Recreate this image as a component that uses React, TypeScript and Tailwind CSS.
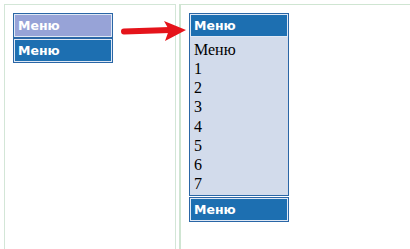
import React from "react";

function Item({ fill, className = "" }: { fill: string; className?: string }) {
  return (
    <div className={`border border-[#2a66a6] ${className}`}>
      <div
        className={`border border-[#dfe8f5] h-[23px] pl-[3px] text-white font-bold text-[12.5px] leading-[21px] ${fill}`}
        style={{ fontFamily: '"DejaVu Sans", Verdana, sans-serif' }}
      >
        Меню
      </div>
    </div>
  );
}

export default function App() {
  const items = ["Меню", "1", "2", "3", "4", "5", "6", "7"];
  return (
    <div className="relative w-[410px] h-[249px] bg-white flex overflow-hidden">
      <div className="ml-[4px] mt-[4px] w-[172px] h-[245px] border border-b-0 border-[#d3e6d7] p-[8px]">
        <div className="w-[100px] flex flex-col">
          <Item fill="bg-[#97a3d7]" />
          <Item fill="bg-[#1d6fb1]" />
        </div>
      </div>
      <div className="ml-[3px] mt-[4px] flex-1 h-[245px] border-l-2 border-t border-[#cfe5d2] p-[8px]">
        <div className="w-[100px] flex flex-col">
          <div className="border border-[#2a66a6] bg-[#d2dbeb]">
            <div
              className="border border-[#dfe8f5] h-[23px] pl-[3px] text-white font-bold text-[12.5px] leading-[21px] bg-[#1d6fb1]"
              style={{ fontFamily: '"DejaVu Sans", Verdana, sans-serif' }}
            >
              Меню
            </div>
            <div
              className="pl-[4px] pt-[3px] pb-[2px] text-black text-[16px] leading-[19.15px]"
              style={{ fontFamily: '"Liberation Serif", "Times New Roman", serif' }}
            >
              {items.map((t) => (
                <div key={t}>{t}</div>
              ))}
            </div>
          </div>
          <Item fill="bg-[#1d6fb1]" className="mt-[1px]" />
        </div>
      </div>
      <svg
        className="absolute left-[120px] top-[16px]"
        width="70"
        height="30"
        viewBox="0 0 70 30"
      >
        <path
          d="M4 15.5 C 20 15, 35 14.5, 50 14"
          stroke="#e5141b"
          strokeWidth="6"
          strokeLinecap="round"
          fill="none"
        />
        <path d="M44 5 L66 14 L45 25 L49 14 Z" fill="#e5141b" />
      </svg>
    </div>
  );
}
